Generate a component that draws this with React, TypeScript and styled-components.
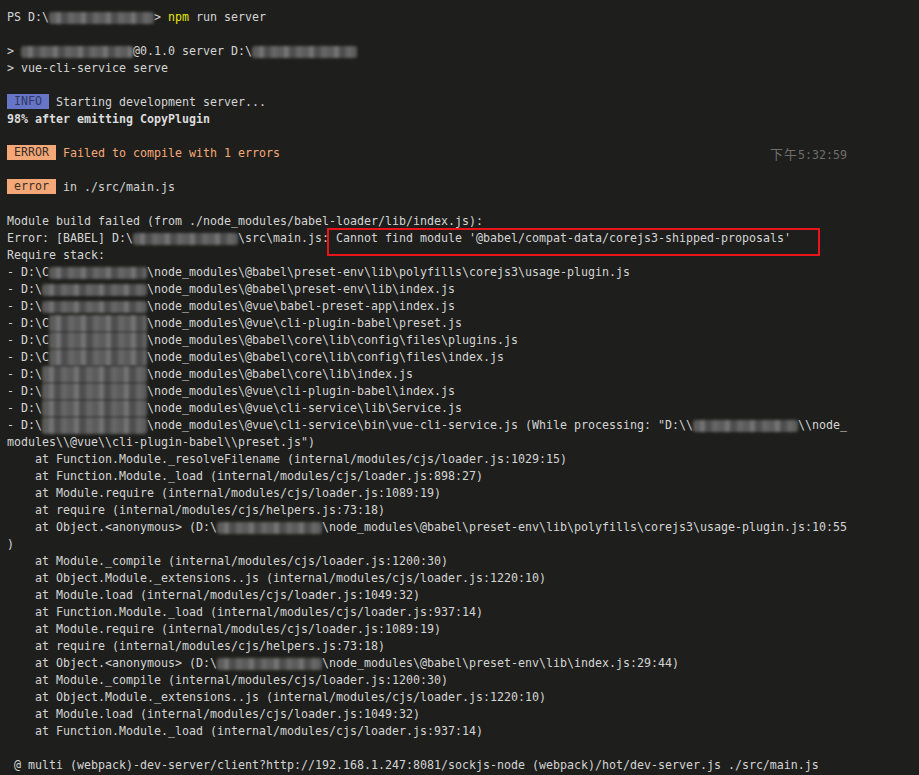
import React from 'react';
import styled, { createGlobalStyle } from 'styled-components';

const GlobalStyle = createGlobalStyle`
  html, body {
    margin: 0;
    padding: 0;
    background: #1e1f1c;
  }
`;

const Terminal = styled.div`
  width: 919px;
  height: 775px;
  box-sizing: border-box;
  padding: 9px 0 0 7px;
  overflow: hidden;
  background: #1e1f1c;
  color: #d4d4d4;
  font-family: 'DejaVu Sans Mono', 'Liberation Mono', monospace;
  font-size: 11.63px;
  line-height: 17px;
`;

const Line = styled.div`
  height: 17px;
  white-space: pre;
`;

const SplitLine = styled(Line)`
  display: flex;
  justify-content: space-between;
  width: 840px;
`;

const Yellow = styled.span`
  color: #e5e510;
`;

const Peach = styled.span`
  color: #f4a878;
`;

const Bold = styled.span`
  font-weight: bold;
  color: #dcdcdc;
`;

const Stamp = styled.span`
  color: #6e6e6e;
`;

const Cjk = styled.span`
  font-family: 'Noto Sans CJK SC', sans-serif;
  font-size: 13px;
  letter-spacing: 1px;
`;

const Badge = styled.span<{ $bg: string; $fg: string }>`
  display: inline-block;
  height: 15px;
  line-height: 15px;
  vertical-align: middle;
  margin-top: -2px;
  background: ${(p) => p.$bg};
  color: ${(p) => p.$fg};
`;

const Redact = styled.span<{ $n: number; $tall?: boolean }>`
  display: inline-block;
  width: ${(p) => p.$n * 7}px;
  height: ${(p) => (p.$tall ? 17 : 12)}px;
  vertical-align: middle;
  border-radius: 3px;
  background: repeating-linear-gradient(
    90deg,
    #5c5c5c 0 7px,
    #737373 7px 12px,
    #4e4e4e 12px 19px,
    #666666 19px 25px
  );
  filter: blur(1.6px);
`;

const Flagged = styled.span`
  position: relative;
  display: inline-block;
  height: 17px;

  &::after {
    content: '';
    position: absolute;
    top: -2px;
    bottom: -9px;
    left: -9px;
    right: -29px;
    border: 2px solid #e8161b;
  }
`;

const stack: [string, number][] = [
  ['\\node_modules\\@babel\\preset-env\\lib\\polyfills\\corejs3\\usage-plugin.js', 1],
  ['\\node_modules\\@babel\\preset-env\\lib\\index.js', 0],
  ['\\node_modules\\@vue\\babel-preset-app\\index.js', 0],
  ['\\node_modules\\@vue\\cli-plugin-babel\\preset.js', 1],
  ['\\node_modules\\@babel\\core\\lib\\config\\files\\plugins.js', 1],
  ['\\node_modules\\@babel\\core\\lib\\config\\files\\index.js', 1],
  ['\\node_modules\\@babel\\core\\lib\\index.js', 0],
  ['\\node_modules\\@vue\\cli-plugin-babel\\index.js', 0],
  ['\\node_modules\\@vue\\cli-service\\lib\\Service.js', 0],
];

const trace1 = [
  'Function.Module._resolveFilename (internal/modules/cjs/loader.js:1029:15)',
  'Function.Module._load (internal/modules/cjs/loader.js:898:27)',
  'Module.require (internal/modules/cjs/loader.js:1089:19)',
  'require (internal/modules/cjs/helpers.js:73:18)',
];

const trace2 = [
  'Module._compile (internal/modules/cjs/loader.js:1200:30)',
  'Object.Module._extensions..js (internal/modules/cjs/loader.js:1220:10)',
  'Module.load (internal/modules/cjs/loader.js:1049:32)',
  'Function.Module._load (internal/modules/cjs/loader.js:937:14)',
  'Module.require (internal/modules/cjs/loader.js:1089:19)',
  'require (internal/modules/cjs/helpers.js:73:18)',
];

const trace3 = [
  'Module._compile (internal/modules/cjs/loader.js:1200:30)',
  'Object.Module._extensions..js (internal/modules/cjs/loader.js:1220:10)',
  'Module.load (internal/modules/cjs/loader.js:1049:32)',
  'Function.Module._load (internal/modules/cjs/loader.js:937:14)',
];

const App: React.FC = () => {
  return (
    <>
      <GlobalStyle />
      <Terminal>
        <Line>
          PS D:\<Redact $n={15} />{'> '}<Yellow>npm</Yellow> run server
        </Line>
        <Line />
        <Line>
          {'> '}<Redact $n={16} />@0.1.0 server D:\<Redact $n={15} />
        </Line>
        <Line>{'> vue-cli-service serve'}</Line>
        <Line />
        <Line>
          <Badge $bg="#6675c6" $fg="#2f3766">{' INFO '}</Badge> Starting development server...
        </Line>
        <Line>
          <Bold>98% after emitting CopyPlugin</Bold>
        </Line>
        <Line />
        <SplitLine>
          <span>
            <Badge $bg="#f4a878" $fg="#3a3028">{' ERROR '}</Badge> <Peach>Failed to compile with 1 errors</Peach>
          </span>
          <Stamp>
            <Cjk>下午</Cjk>5:32:59
          </Stamp>
        </SplitLine>
        <Line />
        <Line>
          <Badge $bg="#f4a878" $fg="#3a3028">{' error '}</Badge> in ./src/main.js
        </Line>
        <Line />
        <Line>Module build failed (from ./node_modules/babel-loader/lib/index.js):</Line>
        <Line>
          Error: [BABEL] D:\<Redact $n={15} />\src\main.js:{' '}
          <Flagged>Cannot find module '@babel/compat-data/corejs3-shipped-proposals'</Flagged>
        </Line>
        <Line>Require stack:</Line>
        {stack.map(([path, keep], i) => (
          <Line key={i}>
            - D:\{keep ? 'C' : ''}
            <Redact $n={keep ? 14 : 15} $tall={i > 2} />
            {path}
          </Line>
        ))}
        <Line>
          - D:\<Redact $n={15} $tall />
          {'\\node_modules\\@vue\\cli-service\\bin\\vue-cli-service.js (While processing: "D:\\\\'}
          <Redact $n={15} />
          {'\\\\node_'}
        </Line>
        <Line>{'modules\\\\@vue\\\\cli-plugin-babel\\\\preset.js")'}</Line>
        {trace1.map((t, i) => (
          <Line key={i}>{'    at ' + t}</Line>
        ))}
        <Line>
          {'    at Object.<anonymous> (D:\\'}
          <Redact $n={15} />
          {'\\node_modules\\@babel\\preset-env\\lib\\polyfills\\corejs3\\usage-plugin.js:10:55'}
        </Line>
        <Line>)</Line>
        {trace2.map((t, i) => (
          <Line key={i}>{'    at ' + t}</Line>
        ))}
        <Line>
          {'    at Object.<anonymous> (D:\\'}
          <Redact $n={15} />
          {'\\node_modules\\@babel\\preset-env\\lib\\index.js:29:44)'}
        </Line>
        {trace3.map((t, i) => (
          <Line key={i}>{'    at ' + t}</Line>
        ))}
        <Line />
        <Line>
          {' @ multi (webpack)-dev-server/client?http://192.168.1.247:8081/sockjs-node (webpack)/hot/dev-server.js ./src/main.js'}
        </Line>
      </Terminal>
    </>
  );
};

export default App;
